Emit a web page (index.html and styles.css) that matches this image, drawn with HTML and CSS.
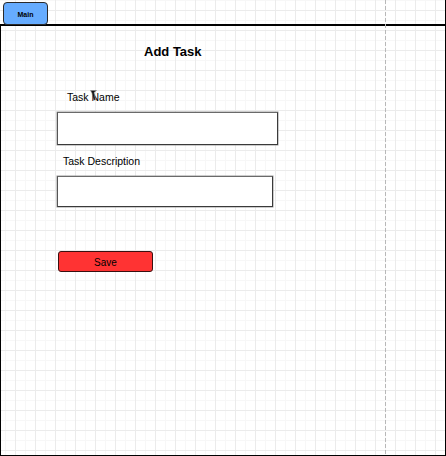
FILE: index.html
```html
<!DOCTYPE html>
<html>
<head>
<meta charset="utf-8">
<link rel="stylesheet" href="styles.css">
</head>
<body>
<div class="frame">
  <div class="tabbar">
    <div class="tab">Main</div>
  </div>
  <div class="content">
    <h1 class="title">Add Task</h1>
    <div class="label label-name">Task Name</div>
    <div class="input input-name"></div>
    <div class="label label-desc">Task Description</div>
    <div class="input input-desc"></div>
    <button class="save">Save</button>
  </div>
  <div class="guide"></div>
  <svg class="cursor" width="8" height="11" viewBox="0 0 8 11">
    <polygon points="0.5,0.5 6.5,0.5 4,2.5 5.5,10 3.5,10 2,3" fill="#111" stroke="#888" stroke-width="0.6"/>
  </svg>
</div>
</body>
</html>
```
FILE: styles.css
```css
html, body {
  margin: 0;
  padding: 0;
  background: #fff;
}
.frame {
  position: relative;
  width: 446px;
  height: 456px;
  box-sizing: border-box;
  border-right: 1px solid #000;
  border-bottom: 1px solid #000;
  font-family: "Liberation Sans", Arial, sans-serif;
  color: #000;
  background-color: #fff;
  background-image:
    linear-gradient(to right, #ebebeb 1px, transparent 1px),
    linear-gradient(to bottom, #ebebeb 1px, transparent 1px),
    linear-gradient(to right, #f7f7f7 1px, transparent 1px),
    linear-gradient(to bottom, #f7f7f7 1px, transparent 1px);
  background-size: 20px 20px, 20px 20px, 10px 10px, 10px 10px;
  background-position: 15px 0, 0 10px, 5px 0, 0 0;
  display: flex;
  flex-direction: column;
}
.tabbar {
  height: 24px;
  border-bottom: 2px solid #000;
  display: flex;
  align-items: flex-end;
  padding-left: 3px;
}
.tab {
  width: 45px;
  height: 23px;
  box-sizing: border-box;
  margin-bottom: -1px;
  background: #66acff;
  border: 1px solid #2a2a2a;
  border-radius: 4px;
  font-size: 7px;
  font-weight: bold;
  display: flex;
  align-items: center;
  justify-content: center;
  padding-top: 1px;
}
.content {
  flex: 1;
  border-left: 1px solid #000;
  padding-left: 56px;
  display: flex;
  flex-direction: column;
  align-items: flex-start;
}
.title {
  margin: 18px 0 0 87px;
  font-size: 13px;
  line-height: 16px;
  font-weight: bold;
}
.label {
  font-size: 10.5px;
  line-height: 12px;
}
.label-name {
  margin-top: 31px;
  margin-left: 10px;
}
.label-desc {
  margin-top: 10px;
  margin-left: 6px;
}
.input {
  box-sizing: border-box;
  background: #fff;
  border: 1px solid #3a3a3a;
  border-top-color: #6a6a6a;
  border-left-color: #555;
  box-shadow: 0 0 0 0.5px #999;
}
.input-name {
  margin-top: 9px;
  width: 221px;
  height: 33px;
}
.input-desc {
  margin-top: 9px;
  width: 216px;
  height: 31px;
}
.save {
  margin: 44px 0 0 1px;
  width: 95px;
  height: 21px;
  box-sizing: border-box;
  background: #ff3333;
  border: 1px solid #3a1010;
  border-radius: 3px;
  font-family: "Liberation Sans", Arial, sans-serif;
  font-size: 10px;
  color: #000;
  padding: 1px 0 0;
}
.guide {
  position: absolute;
  left: 385px;
  top: 0;
  bottom: 0;
  width: 1px;
  background: repeating-linear-gradient(to bottom, #b8b8b8 0 4px, transparent 4px 6px);
}
.cursor {
  position: absolute;
  left: 90px;
  top: 90px;
}
```
